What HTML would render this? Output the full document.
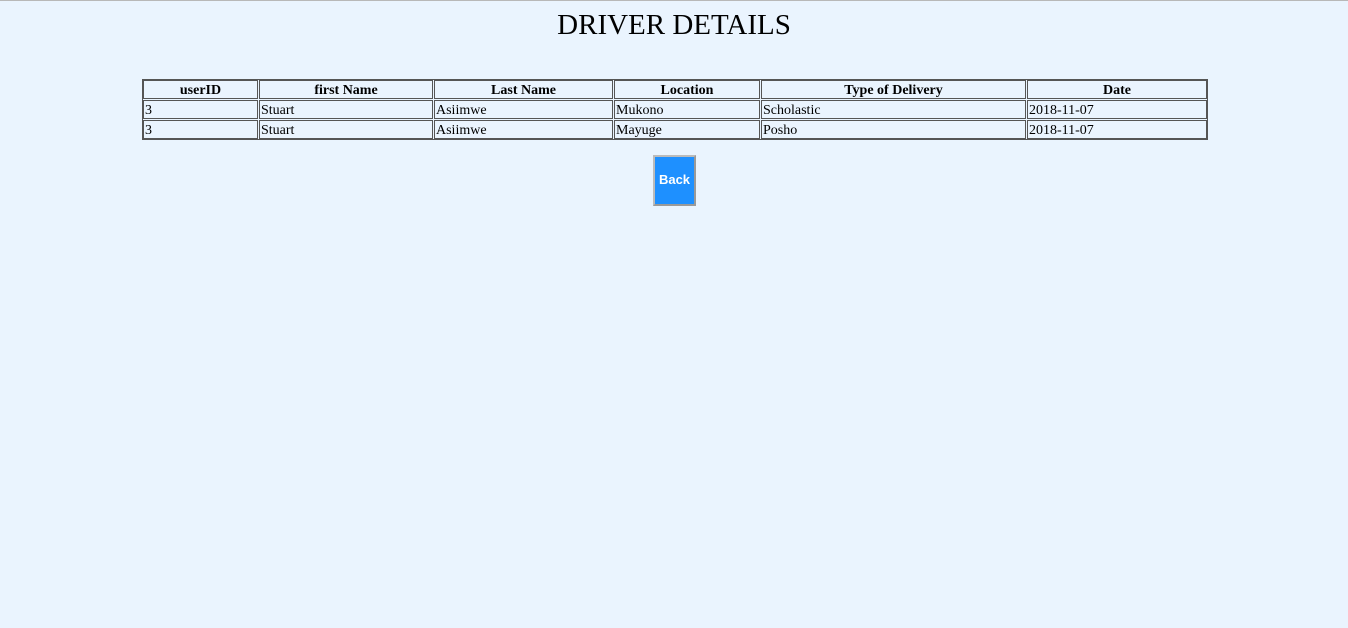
<!DOCTYPE html>
<html><head><style>
body{margin:0;background:#eaf4fe;width:1348px;height:628px;position:relative;overflow:hidden;font-family:"Liberation Serif",serif;color:#000}
.top{position:absolute;left:0;top:0;width:1348px;height:1px;background:#b8b8b8}
h1{position:absolute;left:0;width:1348px;top:8px;margin:0;text-align:center;font-weight:normal;font-size:29px;line-height:34px}
.tbl{position:absolute;left:142px;top:79px;width:1064px;height:59px;border:1px solid #555}
.c{position:absolute;border:1px solid #555;box-sizing:border-box;font-size:14px;line-height:19px;padding-left:1px;white-space:nowrap;overflow:hidden}
.h{text-align:center;font-weight:bold;padding:0}
.btn{position:absolute;left:653px;top:155px;width:43px;height:51px;box-sizing:border-box;background:#1e90ff;border:2px solid #999;border-top-color:#bbb;border-left-color:#bbb;color:#fff;font:bold 13px "Liberation Sans",sans-serif;text-align:center;line-height:45px}
</style></head><body>
<div class="top"></div>
<h1>DRIVER DETAILS</h1>
<div class="tbl"></div>
<div style="position:absolute;left:0;top:0">
<div class="c h" style="left:143px;top:80px;width:115px;height:19px">userID</div>
<div class="c h" style="left:259px;top:80px;width:174px;height:19px">first Name</div>
<div class="c h" style="left:434px;top:80px;width:179px;height:19px">Last Name</div>
<div class="c h" style="left:614px;top:80px;width:146px;height:19px">Location</div>
<div class="c h" style="left:761px;top:80px;width:265px;height:19px">Type of Delivery</div>
<div class="c h" style="left:1027px;top:80px;width:180px;height:19px">Date</div>

<div class="c" style="left:143px;top:100px;width:115px;height:19px">3</div>
<div class="c" style="left:259px;top:100px;width:174px;height:19px">Stuart</div>
<div class="c" style="left:434px;top:100px;width:179px;height:19px">Asiimwe</div>
<div class="c" style="left:614px;top:100px;width:146px;height:19px">Mukono</div>
<div class="c" style="left:761px;top:100px;width:265px;height:19px">Scholastic</div>
<div class="c" style="left:1027px;top:100px;width:180px;height:19px">2018-11-07</div>

<div class="c" style="left:143px;top:120px;width:115px;height:19px">3</div>
<div class="c" style="left:259px;top:120px;width:174px;height:19px">Stuart</div>
<div class="c" style="left:434px;top:120px;width:179px;height:19px">Asiimwe</div>
<div class="c" style="left:614px;top:120px;width:146px;height:19px">Mayuge</div>
<div class="c" style="left:761px;top:120px;width:265px;height:19px">Posho</div>
<div class="c" style="left:1027px;top:120px;width:180px;height:19px">2018-11-07</div>
</div>
<div class="btn">Back</div>
</body></html>
